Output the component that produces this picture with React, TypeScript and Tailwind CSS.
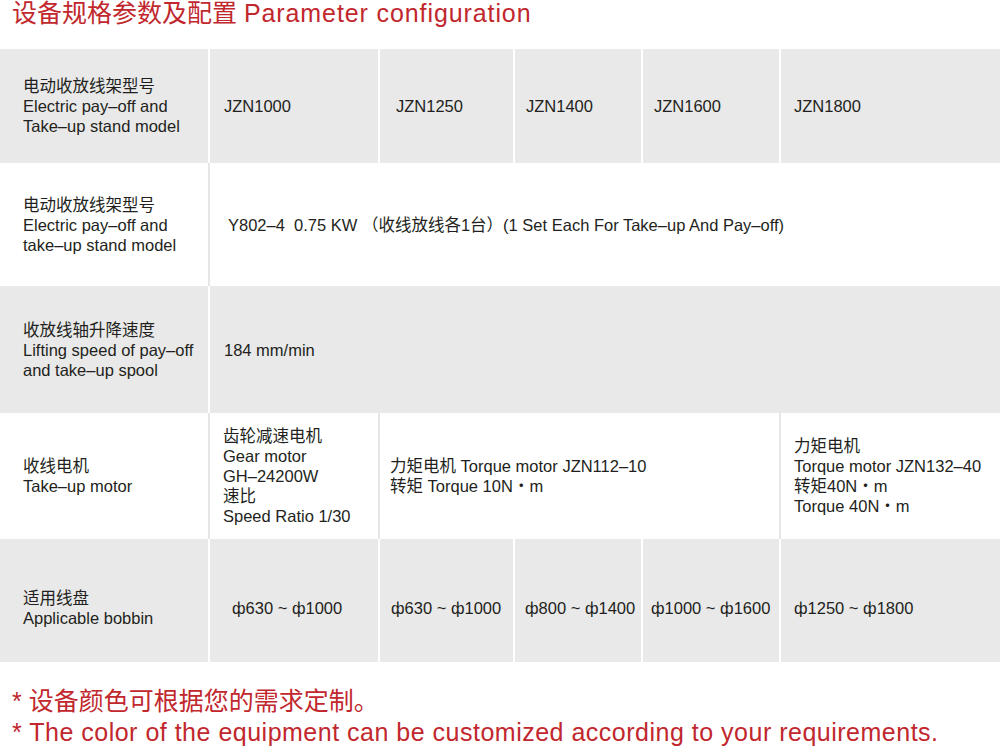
const cols = "grid grid-cols-[208px_168px_133px_126px_136px_1fr] gap-x-[2px]";

function Label({ zh, en }: { zh: string; en: string[] }) {
  return (
    <div className="flex flex-col justify-center pl-[23px]">
      <span>{zh}</span>
      {en.map((l) => (
        <span key={l}>{l}</span>
      ))}
    </div>
  );
}

export default function App() {
  return (
    <main className="w-[1000px] bg-white font-['Liberation_Sans','Noto_Sans_CJK_SC',sans-serif] text-[16.5px] leading-[20px] text-[#231f20]">
      <h1 className="pl-[12px] text-[25px] leading-[26px] text-[#c1272d]">
        设备规格参数及配置 <span className="tracking-[0.9px]">Parameter configuration</span>
      </h1>

      <div className="mt-[23px]">
        {/* model row */}
        <div className={`${cols} h-[114px] bg-white`}>
          <div className="flex bg-[#e9e9e9]">
            <Label zh="电动收放线架型号" en={["Electric pay–off and", "Take–up stand model"]} />
          </div>
          <div className="flex items-center bg-[#e9e9e9] pl-[14px]">JZN1000</div>
          <div className="flex items-center bg-[#e9e9e9] pl-[16px]">JZN1250</div>
          <div className="flex items-center bg-[#e9e9e9] pl-[11px]">JZN1400</div>
          <div className="flex items-center bg-[#e9e9e9] pl-[11px]">JZN1600</div>
          <div className="flex items-center bg-[#e9e9e9] pl-[13px]">JZN1800</div>
        </div>

        {/* motor power row */}
        <div className={`${cols} h-[123px] bg-[#e6e6e6]`}>
          <div className="flex bg-white">
            <Label zh="电动收放线架型号" en={["Electric pay–off and", "take–up stand model"]} />
          </div>
          <div className="col-span-5 flex items-center whitespace-pre bg-white pl-[18px]">
            Y802–4  0.75 KW （收线放线各1台）(1 Set Each For Take–up And Pay–off)
          </div>
        </div>

        {/* lifting speed row */}
        <div className={`${cols} h-[127px] bg-white`}>
          <div className="flex bg-[#e9e9e9]">
            <Label zh="收放线轴升降速度" en={["Lifting speed of pay–off", "and take–up spool"]} />
          </div>
          <div className="col-span-5 flex items-center bg-[#e9e9e9] pl-[14px]">184 mm/min</div>
        </div>

        {/* take-up motor row */}
        <div className={`${cols} h-[126px] bg-[#e6e6e6]`}>
          <div className="flex bg-white">
            <Label zh="收线电机" en={["Take–up motor"]} />
          </div>
          <div className="flex flex-col justify-center bg-white pl-[13px]">
            <span>齿轮减速电机</span>
            <span>Gear motor</span>
            <span>GH–24200W</span>
            <span>速比</span>
            <span>Speed Ratio 1/30</span>
          </div>
          <div className="col-span-3 flex flex-col justify-center bg-white pl-[10px]">
            <span>力矩电机 Torque motor JZN112–10</span>
            <span>转矩 Torque 10N・m</span>
          </div>
          <div className="flex flex-col justify-center bg-white pl-[13px]">
            <span>力矩电机</span>
            <span>Torque motor JZN132–40</span>
            <span>转矩40N・m</span>
            <span>Torque 40N・m</span>
          </div>
        </div>

        {/* bobbin row */}
        <div className={`${cols} h-[123px] bg-white`}>
          <div className="flex bg-[#e9e9e9] pt-[15px]">
            <Label zh="适用线盘" en={["Applicable bobbin"]} />
          </div>
          <div className="flex items-center bg-[#e9e9e9] pl-[22px] pt-[15px]">ф630 ~ ф1000</div>
          <div className="flex items-center bg-[#e9e9e9] pl-[11px] pt-[15px]">ф630 ~ ф1000</div>
          <div className="flex items-center bg-[#e9e9e9] pl-[10px] pt-[15px]">ф800 ~ ф1400</div>
          <div className="flex items-center bg-[#e9e9e9] pl-[8px] pt-[15px]">ф1000 ~ ф1600</div>
          <div className="flex items-center bg-[#e9e9e9] pl-[13px] pt-[15px]">ф1250 ~ ф1800</div>
        </div>
      </div>

      <footer className="mt-[24px] pl-[12px] text-[25px] leading-[31px] text-[#c1272d]">
        <p>* 设备颜色可根据您的需求定制。</p>
        <p className="tracking-[0.5px]">
          * The color of the equipment can be customized according to your requirements.
        </p>
      </footer>
    </main>
  );
}
